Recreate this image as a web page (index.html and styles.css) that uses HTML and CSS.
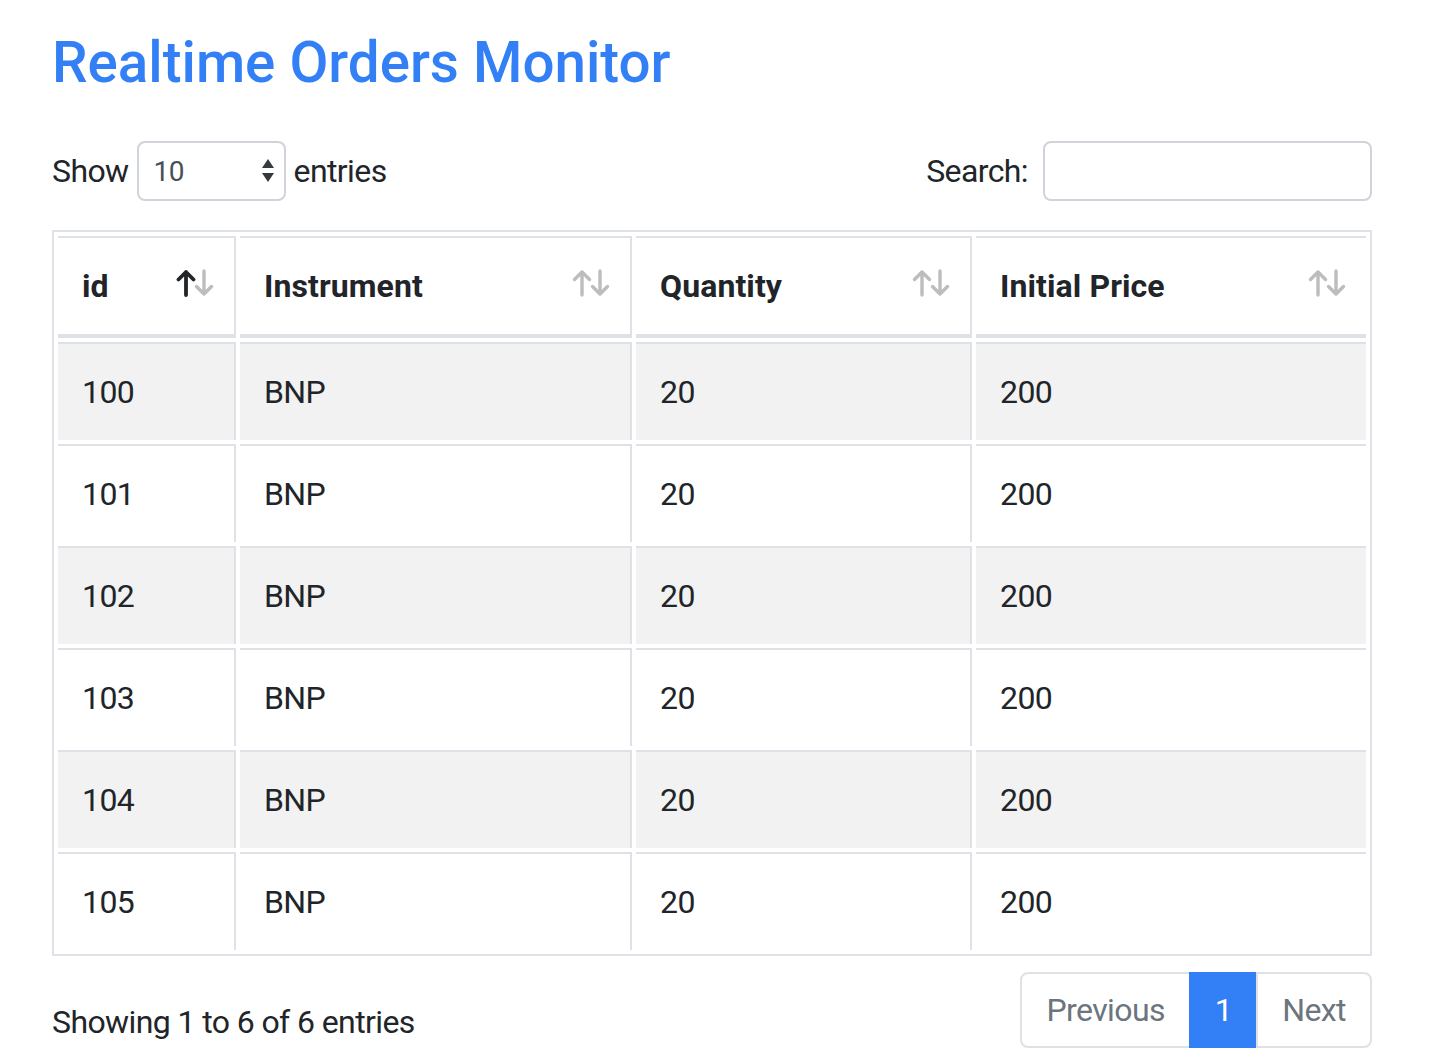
FILE: index.html
```html
<!DOCTYPE html>
<html lang="en">
<head>
  <meta charset="UTF-8">
  <title>Realtime Orders Monitor</title>
  <link rel="stylesheet" href="styles.css">
</head>
<body>
  <div class="page">
    <h1 class="title">Realtime Orders Monitor</h1>

    <div class="toolbar">
      <div class="length">
        Show
        <div class="select-box">
          <span>10</span>
          <svg class="select-arrows" width="12" height="26" viewBox="0 0 12 26">
            <polygon points="0,10 6,1 12,10" />
            <polygon points="0,15 12,15 6,24" />
          </svg>
        </div>
        entries
      </div>
      <div class="search">
        Search:
        <input class="search-input" type="text" />
      </div>
    </div>

    <table class="orders">
      <thead>
        <tr>
          <th class="col-id">
            <div class="th-in">
              <span>id</span>
              <svg class="sort sort-asc" width="38" height="28" viewBox="0 0 38 28">
                <path class="up" d="M10 26 V3 M2.5 10.5 L10 3 L17.5 10.5" />
                <path class="down" d="M28 2 V25 M20.5 17.5 L28 25 L35.5 17.5" />
              </svg>
            </div>
          </th>
          <th class="col-inst">
            <div class="th-in">
              <span>Instrument</span>
              <svg class="sort" width="38" height="28" viewBox="0 0 38 28">
                <path class="up" d="M10 26 V3 M2.5 10.5 L10 3 L17.5 10.5" />
                <path class="down" d="M28 2 V25 M20.5 17.5 L28 25 L35.5 17.5" />
              </svg>
            </div>
          </th>
          <th class="col-qty">
            <div class="th-in">
              <span>Quantity</span>
              <svg class="sort" width="38" height="28" viewBox="0 0 38 28">
                <path class="up" d="M10 26 V3 M2.5 10.5 L10 3 L17.5 10.5" />
                <path class="down" d="M28 2 V25 M20.5 17.5 L28 25 L35.5 17.5" />
              </svg>
            </div>
          </th>
          <th class="col-price">
            <div class="th-in">
              <span>Initial Price</span>
              <svg class="sort" width="38" height="28" viewBox="0 0 38 28">
                <path class="up" d="M10 26 V3 M2.5 10.5 L10 3 L17.5 10.5" />
                <path class="down" d="M28 2 V25 M20.5 17.5 L28 25 L35.5 17.5" />
              </svg>
            </div>
          </th>
        </tr>
      </thead>
      <tbody>
        <tr><td>100</td><td>BNP</td><td>20</td><td>200</td></tr>
        <tr><td>101</td><td>BNP</td><td>20</td><td>200</td></tr>
        <tr><td>102</td><td>BNP</td><td>20</td><td>200</td></tr>
        <tr><td>103</td><td>BNP</td><td>20</td><td>200</td></tr>
        <tr><td>104</td><td>BNP</td><td>20</td><td>200</td></tr>
        <tr><td>105</td><td>BNP</td><td>20</td><td>200</td></tr>
      </tbody>
    </table>

    <div class="footer">
      <div class="info">Showing 1 to 6 of 6 entries</div>
      <ul class="pager">
        <li class="page-link first">Previous</li>
        <li class="page-link active">1</li>
        <li class="page-link last">Next</li>
      </ul>
    </div>
  </div>
</body>
</html>
```

FILE: styles.css
```css
body {
  margin: 0;
  font-family: Roboto, "Liberation Sans", sans-serif;
  font-size: 32px;
  letter-spacing: -0.6px;
  color: #212529;
  background: #fff;
}

.page {
  width: 1320px;
  padding-left: 52px;
}

.title {
  margin: 28px 0 0;
  font-size: 56.5px;
  font-weight: 500;
  letter-spacing: 0;
  line-height: 70px;
  color: #3380f6;
}

.toolbar {
  display: flex;
  justify-content: space-between;
  align-items: center;
  margin-top: 43px;
  height: 60px;
}

.length,
.search {
  display: flex;
  align-items: center;
}

.select-box {
  box-sizing: border-box;
  width: 149px;
  height: 60px;
  margin: 0 8px;
  padding: 0 10px 0 15px;
  border: 2px solid #ced4da;
  border-radius: 8px;
  display: flex;
  align-items: center;
  justify-content: space-between;
  font-size: 28px;
  color: #495057;
}

.select-arrows polygon {
  fill: #343a40;
}

.search-input {
  box-sizing: border-box;
  width: 329px;
  height: 60px;
  margin: 0 0 0 15px;
  border: 2px solid #ced4da;
  border-radius: 8px;
  font-size: 28px;
  outline: none;
}

.orders {
  margin-top: 29px;
  width: 1320px;
  border: 2px solid #dee2e6;
  border-collapse: separate;
  border-spacing: 4px;
}

.orders th,
.orders td {
  box-sizing: border-box;
  border-top: 2px solid #dee2e6;
  border-right: 2px solid #dee2e6;
  padding: 24px;
  line-height: 48px;
  text-align: left;
  vertical-align: middle;
}

.orders th:last-child,
.orders td:last-child {
  border-right: 0;
}

.orders thead th {
  border-bottom: 4px solid #dee2e6;
  font-weight: 700;
  letter-spacing: 0.1px;
  padding-right: 20px;
}

.col-id { width: 178px; }
.col-inst { width: 392px; }
.col-qty { width: 336px; }
.col-price { width: 390px; }

.th-in {
  display: flex;
  justify-content: space-between;
  align-items: center;
}

.sort {
  margin-bottom: 6px;
}

.sort path {
  fill: none;
  stroke: #bcbdbe;
  stroke-width: 3.4;
  stroke-linecap: round;
  stroke-linejoin: round;
}

.sort-asc .up {
  stroke: #212529;
  stroke-width: 3.8;
}

.orders tbody tr:nth-child(odd) td {
  background: #f2f2f2;
}

.footer {
  display: flex;
  justify-content: space-between;
  align-items: flex-start;
  margin-top: 16px;
}

.info {
  padding-top: 26px;
  line-height: 48px;
}

.pager {
  display: flex;
  list-style: none;
  margin: 0;
  padding: 0;
}

.page-link {
  padding: 16px 24px;
  line-height: 40px;
  border: 2px solid #dee2e6;
  margin-left: -2px;
  color: #6c757d;
  background: #fff;
}

.page-link.first {
  margin-left: 0;
  border-radius: 8px 0 0 8px;
}

.page-link.last {
  border-radius: 0 8px 8px 0;
}

.page-link.active {
  background: #3380f6;
  border-color: #3380f6;
  color: #fff;
}
```
